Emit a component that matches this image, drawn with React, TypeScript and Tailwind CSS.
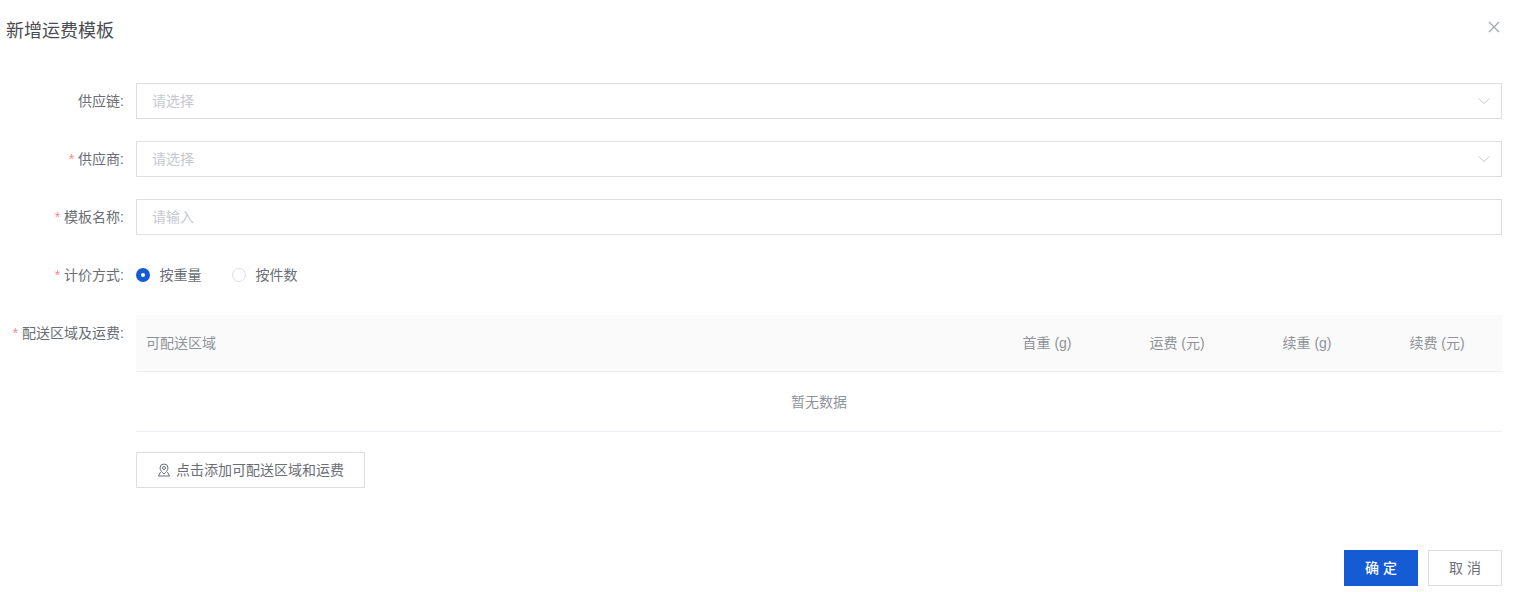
import React from "react";

function Label({ text, required = true }: { text: string; required?: boolean }) {
  return (
    <div className="w-[124px] shrink-0 text-right text-[14px] leading-[36px] text-[#6b6e75] whitespace-nowrap">
      {required && <span className="mr-[4px] text-[#f78989]">*</span>}
      {text}:
    </div>
  );
}

function Chevron() {
  return (
    <svg width="12" height="12" viewBox="0 0 12 12" fill="none" className="text-[#c5c8d0]">
      <path d="M0.5 3.5 6 8.5 11.5 3.5" stroke="currentColor" strokeWidth="1" />
    </svg>
  );
}

function SelectBox() {
  return (
    <div className="flex h-9 flex-1 items-center justify-between border border-[#dcdee6] pl-[15px] pr-[11px] text-[14px] text-[#c5c8d0]">
      <span>请选择</span>
      <Chevron />
    </div>
  );
}

function Radio({ checked, text }: { checked?: boolean; text: string }) {
  return (
    <div className="flex items-center">
      {checked ? (
        <span className="flex h-[14px] w-[14px] items-center justify-center rounded-full bg-[#155bd4]">
          <span className="h-1 w-1 rounded-full bg-white" />
        </span>
      ) : (
        <span className="h-[14px] w-[14px] rounded-full border border-[#dcdee6] bg-white" />
      )}
      <span className="ml-[9.5px] text-[14px] text-[#6b6e75]">{text}</span>
    </div>
  );
}

export default function App() {
  return (
    <div
      className="h-[592px] w-[1518px] overflow-hidden bg-white"
      style={{ fontFamily: '"Liberation Sans", "Noto Sans CJK SC", sans-serif' }}
    >
      <div className="flex h-[83px] items-start justify-between pl-[6px] pr-[18px]">
        <h1 className="pt-[18px] text-[18px] leading-[26px] font-normal text-[#4a4c52]">新增运费模板</h1>
        <svg width="12" height="12" viewBox="0 0 12 12" fill="none" className="mt-[21px] text-[#a3a6ad]">
          <path d="M1 1 11 11M11 1 1 11" stroke="currentColor" strokeWidth="1.2" />
        </svg>
      </div>

      <div className="flex flex-col gap-[22px] pr-4">
        <div className="flex gap-3">
          <Label text="供应链" required={false} />
          <SelectBox />
        </div>
        <div className="flex gap-3">
          <Label text="供应商" />
          <SelectBox />
        </div>
        <div className="flex gap-3">
          <Label text="模板名称" />
          <div className="flex h-9 flex-1 items-center border border-[#dcdee6] pl-[15px] text-[14px] text-[#c5c8d0]">
            请输入
          </div>
        </div>
        <div className="flex gap-3">
          <Label text="计价方式" />
          <div className="flex h-9 items-center gap-[30.5px]">
            <Radio checked text="按重量" />
            <Radio text="按件数" />
          </div>
        </div>
        <div className="flex gap-3">
          <Label text="配送区域及运费" />
          <div className="flex-1">
            <div className="grid h-[57px] grid-cols-[1fr_130px_130px_130px_130px] items-center border-b border-[#ebeef5] bg-[#fafafa] pt-px text-[14px] text-[#909399]">
              <div className="pl-[10px]">可配送区域</div>
              <div className="text-center">首重 (g)</div>
              <div className="text-center">运费 (元)</div>
              <div className="text-center">续重 (g)</div>
              <div className="text-center">续费 (元)</div>
            </div>
            <div className="flex h-[60px] items-center justify-center border-b border-[#ebeef5] pt-px text-[14px] text-[#909399]">
              暂无数据
            </div>
            <button className="mt-5 flex h-9 w-[229px] items-center justify-center gap-[5px] border border-[#dcdee6] bg-white text-[14px] text-[#6b6e75]">
              <svg width="14" height="14" viewBox="0 0 14 14" fill="none" stroke="currentColor" strokeWidth="1">
                <path d="M7 1a4 4 0 0 0-4 4c0 2.6 2.6 4.6 4 6 1.4-1.4 4-3.4 4-6a4 4 0 0 0-4-4Z" />
                <circle cx="7" cy="5" r="1.5" />
                <path d="M3.6 9 1.5 13h11L10.4 9" />
              </svg>
              点击添加可配送区域和运费
            </button>
          </div>
        </div>
      </div>

      <div className="mt-[62px] flex justify-end gap-[10px] pr-4">
        <button className="h-9 w-[74px] bg-[#155bd4] text-[14px] font-medium text-white">确 定</button>
        <button className="h-9 w-[74px] border border-[#dcdee6] bg-white text-[14px] text-[#6b6e75]">取 消</button>
      </div>
    </div>
  );
}
